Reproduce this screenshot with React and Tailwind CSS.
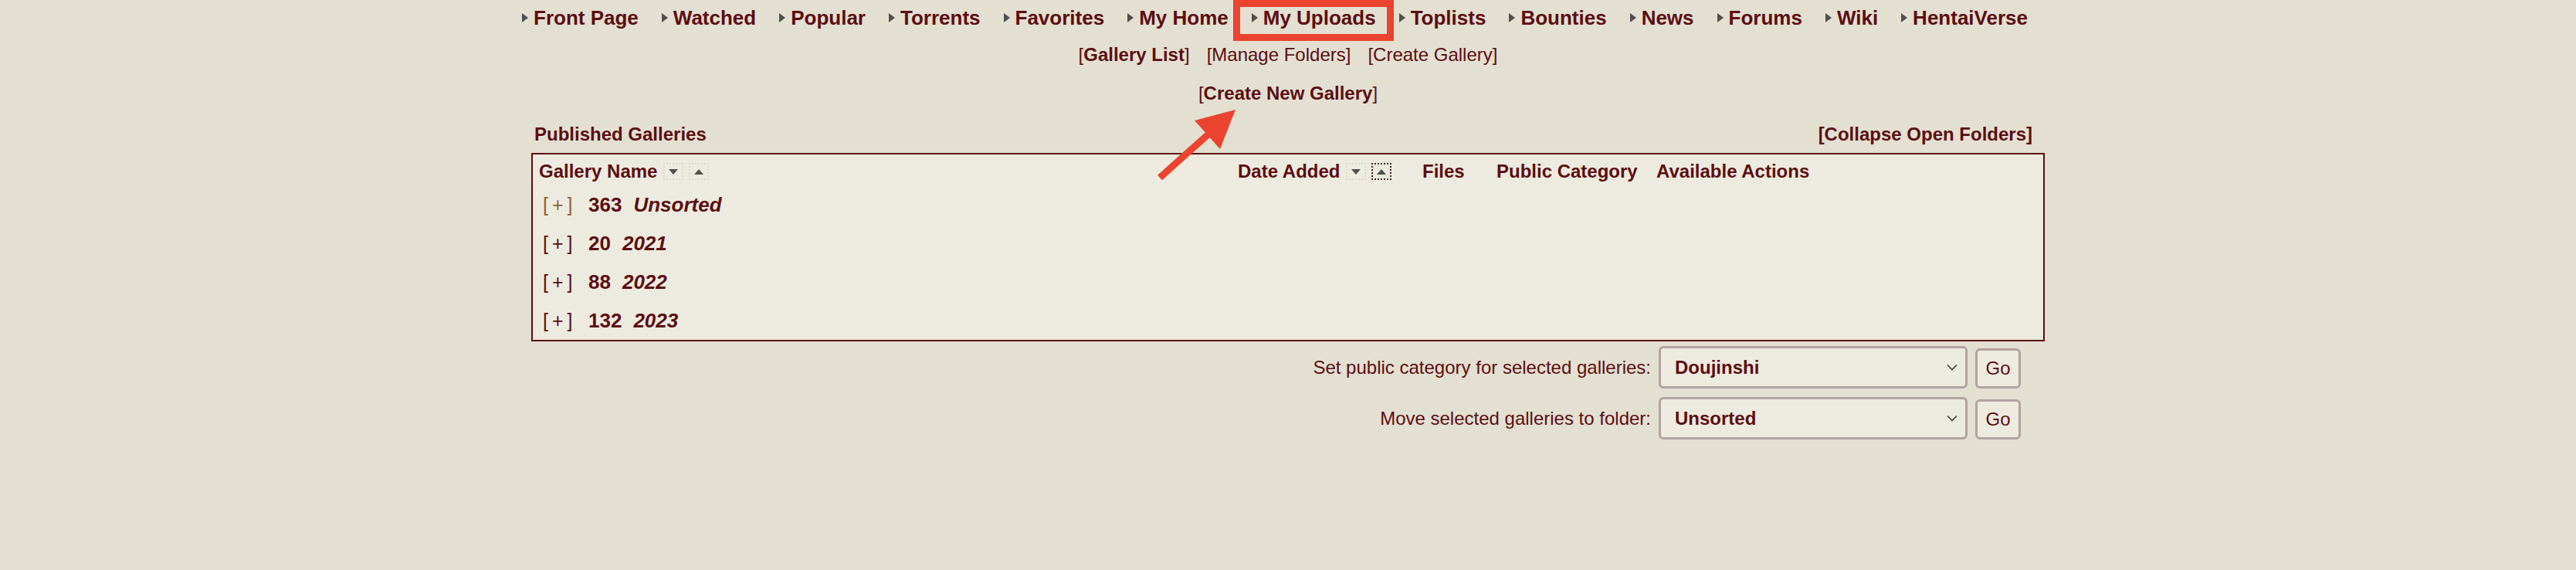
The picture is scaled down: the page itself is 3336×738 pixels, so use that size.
const NAV = [
  "Front Page",
  "Watched",
  "Popular",
  "Torrents",
  "Favorites",
  "My Home",
  "My Uploads",
  "Toplists",
  "Bounties",
  "News",
  "Forums",
  "Wiki",
  "HentaiVerse",
];

const FOLDERS = [
  { count: 363, name: "Unsorted", active: true },
  { count: 20, name: "2021" },
  { count: 88, name: "2022" },
  { count: 132, name: "2023" },
];

function NavArrow() {
  return (
    <svg width="8" height="12" viewBox="0 0 8 12" className="shrink-0">
      <path d="M0 0 L8 6 L0 12 Z" fill="#4f4f4f" />
    </svg>
  );
}

function SortBtn({ dir, focused }) {
  return (
    <span
      className={
        focused
          ? "inline-flex h-[22px] w-[26px] items-center justify-center border-2 border-dotted border-[#3b2626]"
          : "inline-flex h-[22px] w-[26px] items-center justify-center border-2 border-dotted border-[#dcd8cb]"
      }
    >
      <svg width="12" height="7" viewBox="0 0 12 7">
        <path d={dir === "down" ? "M0 0H12L6 7Z" : "M0 7H12L6 0Z"} fill="#505050" />
      </svg>
    </span>
  );
}

function Chevron() {
  return (
    <svg width="14" height="9" viewBox="0 0 14 9" className="shrink-0">
      <path d="M1 1.5 L7 7.5 L13 1.5" fill="none" stroke="#3c3c3c" strokeWidth="1.6" />
    </svg>
  );
}

function ActionRow({ label, value }) {
  return (
    <div className="flex items-end gap-[10px]">
      <span className="self-center text-[24px] leading-[30px]">{label}</span>
      <div className="flex h-[55px] w-[400px] items-center justify-between rounded-[6px] border-[3px] border-[#b1a3a1] bg-[#edebdf] pl-[18px] pr-[10px]">
        <span className="text-[24px] font-bold">{value}</span>
        <Chevron />
      </div>
      <button className="h-[52px] w-[59px] rounded-[6px] border-[3px] border-[#b1a3a1] bg-[#edebdf] text-[24px] text-[#5c0d11]">
        Go
      </button>
    </div>
  );
}

export default function App() {
  return (
    <div className="relative min-h-[738px] bg-[#e3e0d1] font-['Liberation_Sans',Arial,sans-serif] text-[#5c0d11]">
      {/* top nav */}
      <nav className="flex justify-center gap-[30px] pt-[3px] pr-[34px]">
        {NAV.map((item) => (
          <span key={item} className="relative flex items-center gap-[7px]">
            <NavArrow />
            <span className="text-[26px] font-bold leading-[40px]">{item}</span>
            {item === "My Uploads" && (
              <span className="pointer-events-none absolute top-[-3px] bottom-[-10px] left-[-24px] right-[-23px] border-[9px] border-[#ea4330]" />
            )}
          </span>
        ))}
      </nav>

      {/* sub links */}
      <div className="mt-[13px] flex justify-center gap-[22px] text-[24px] leading-[30px]">
        <span>
          [<b>Gallery List</b>]
        </span>
        <span>[Manage Folders]</span>
        <span>[Create Gallery]</span>
      </div>
      <div className="mt-[20px] text-center text-[24px] leading-[30px]">
        [<b>Create New Gallery</b>]
      </div>

      <div className="mx-auto mt-[23px] w-[1960px]">
        <div className="flex justify-between pl-[4px] pr-[16px] text-[24px] font-bold leading-[30px]">
          <span>Published Galleries</span>
          <span>[Collapse Open Folders]</span>
        </div>

        {/* gallery table */}
        <div className="mt-[9px] border-2 border-[#5c0d12] bg-[#edebdf] pt-[7px]">
          <div className="flex items-center text-[24px] font-bold leading-[30px]">
            <div className="flex w-[913px] items-center gap-[7px] pl-[8px]">
              <span className="mr-[1px]">Gallery Name</span>
              <SortBtn dir="down" />
              <SortBtn dir="up" />
            </div>
            <div className="flex w-[239px] items-center gap-[7px]">
              <span className="mr-[1px]">Date Added</span>
              <SortBtn dir="down" />
              <SortBtn dir="up" focused />
            </div>
            <div className="w-[96px]">Files</div>
            <div className="w-[207px]">Public Category</div>
            <div>Available Actions</div>
          </div>

          <div className="mt-[3px]">
            {FOLDERS.map((f) => (
              <div key={f.name} className="flex h-[50px] items-center pl-[13px] text-[26px] leading-[50px]">
                <span
                  className={
                    f.active
                      ? "w-[59px] text-[25px] tracking-[5px] text-[#94612f]"
                      : "w-[59px] text-[25px] tracking-[5px]"
                  }
                >
                  [+]
                </span>
                <span className="font-bold">{f.count}</span>
                <span className="ml-[15px] font-bold italic">{f.name}</span>
              </div>
            ))}
          </div>
        </div>

        {/* bulk actions */}
        <div className="mt-[6px] flex flex-col items-end gap-[11px] pr-[31px]">
          <ActionRow label="Set public category for selected galleries:" value="Doujinshi" />
          <ActionRow label="Move selected galleries to folder:" value="Unsorted" />
        </div>
      </div>

      {/* annotation arrow */}
      <svg
        className="pointer-events-none absolute left-[1490px] top-[130px]"
        width="120"
        height="110"
        viewBox="0 0 120 110"
      >
        <line x1="12" y1="100" x2="78" y2="41" stroke="#ea4330" strokeWidth="9" />
        <path d="M110 12 L57 26 L90 63 Z" fill="#ea4330" />
      </svg>
    </div>
  );
}
